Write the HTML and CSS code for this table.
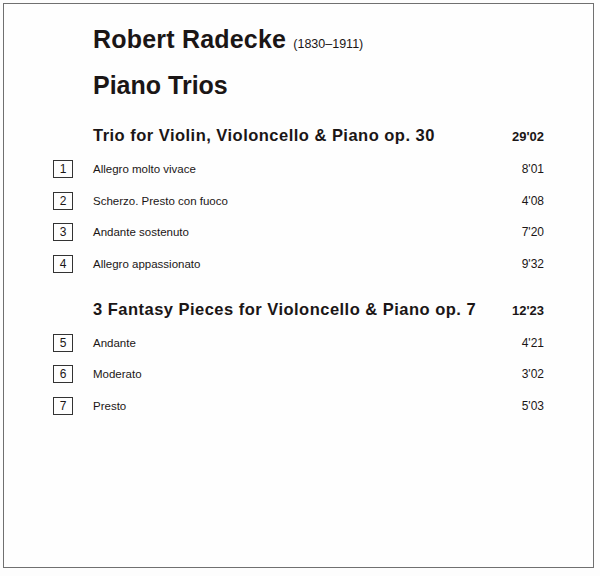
FILE: index.html
```html
<!DOCTYPE html>
<html>
<head>
<meta charset="utf-8">
<link rel="stylesheet" href="styles.css">
</head>
<body>
<div class="sheet">
  <h1 class="composer">Robert Radecke <span class="dates">(1830–1911)</span></h1>
  <h2 class="album">Piano Trios</h2>

  <div class="work">
    <div class="work-head"><span class="work-title">Trio for Violin, Violoncello &amp; Piano op. 30</span><span class="work-time">29'02</span></div>
    <div class="track"><span class="num">1</span><span class="tname">Allegro molto vivace</span><span class="ttime">8'01</span></div>
    <div class="track"><span class="num">2</span><span class="tname">Scherzo. Presto con fuoco</span><span class="ttime">4'08</span></div>
    <div class="track"><span class="num">3</span><span class="tname">Andante sostenuto</span><span class="ttime">7'20</span></div>
    <div class="track"><span class="num">4</span><span class="tname">Allegro appassionato</span><span class="ttime">9'32</span></div>
  </div>

  <div class="work">
    <div class="work-head"><span class="work-title">3 Fantasy Pieces for Violoncello &amp; Piano op. 7</span><span class="work-time">12'23</span></div>
    <div class="track"><span class="num">5</span><span class="tname">Andante</span><span class="ttime">4'21</span></div>
    <div class="track"><span class="num">6</span><span class="tname">Moderato</span><span class="ttime">3'02</span></div>
    <div class="track"><span class="num">7</span><span class="tname">Presto</span><span class="ttime">5'03</span></div>
  </div>
</div>
</body>
</html>
```
FILE: styles.css
```css
html, body {
  margin: 0;
  padding: 0;
  background: #fdfdfd;
}
body {
  font-family: "Liberation Sans", Arial, sans-serif;
  color: #1b1616;
}
.sheet {
  margin: 3px 0 0 3px;
  height: 563px;
  border: 1px solid #707070;
  padding: 0 49px 0 49px;
  box-sizing: content-box;
  width: 491px;
  background: #fefefe;
}
.composer {
  margin: 20px 0 0 40px;
  font-size: 25px;
  font-weight: bold;
  line-height: 30px;
  letter-spacing: 0.2px;
}
.dates {
  font-size: 12.5px;
  font-weight: normal;
  letter-spacing: 0;
}
.album {
  margin: 11px 0 0 40px;
  font-size: 25px;
  font-weight: bold;
  line-height: 30px;
}
.work {
  display: flex;
  flex-direction: column;
}
.work-head {
  display: flex;
  justify-content: space-between;
  align-items: baseline;
  margin: 26px 0 0 40px;
  height: 27px;
}
.work-title {
  font-size: 16.5px;
  font-weight: bold;
  letter-spacing: 0.48px;
}
.work-time {
  font-size: 13px;
  font-weight: bold;
}
.track {
  display: flex;
  align-items: center;
  height: 31.7px;
}
.num {
  width: 18px;
  height: 16px;
  border: 1px solid #333;
  font-size: 12px;
  line-height: 16px;
  text-align: center;
  margin-right: 20px;
  flex: none;
}
.tname {
  flex: 1;
  font-size: 11.5px;
}
.ttime {
  font-size: 12px;
}
.work + .work .work-head {
  margin-top: 20px;
}
```
